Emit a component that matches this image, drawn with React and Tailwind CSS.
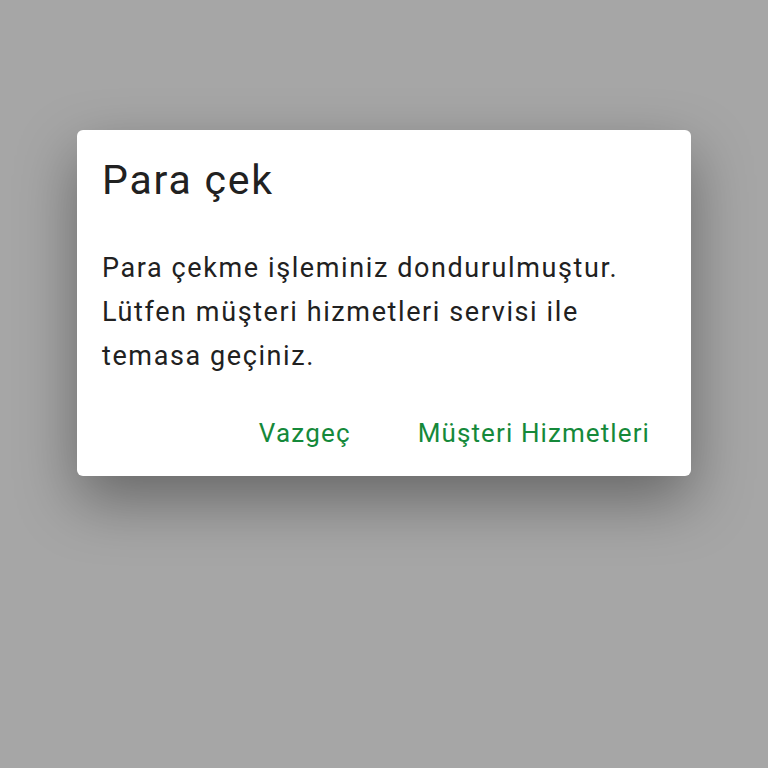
export default function App() {
    return (
        <div
            className="w-full h-screen bg-[#a6a6a6] pt-[130px] pl-[77px]"
            style={{ fontFamily: "Roboto, 'Noto Sans', sans-serif" }}
        >
            {/* Dialog */}
            <div className="w-[614px] bg-white rounded-[6px] shadow-[0_24px_60px_rgba(0,0,0,0.38)] pt-[26px] pb-[27px]">
                <h2 className="pl-[25px] text-[41px] leading-[48px] tracking-[1.8px] text-[#212121] font-normal">
                    Para çek
                </h2>

                <p className="mt-[42px] pl-[25px] pr-[10px] text-[27px] leading-[44px] tracking-[1.6px] text-[#212121] whitespace-nowrap">
                    Para çekme işleminiz dondurulmuştur.
                    <br />
                    Lütfen müşteri hizmetleri servisi ile
                    <br />
                    temasa geçiniz.
                </p>

                {/* Actions */}
                <div className="mt-[39px] flex justify-end items-center gap-[67px] pr-[41px]">
                    <button className="text-[26px] leading-[32px] tracking-[1.2px] text-[#15893a]">Vazgeç</button>
                    <button className="text-[26px] leading-[32px] tracking-[1.1px] text-[#15893a]">Müşteri Hizmetleri</button>
                </div>
            </div>
        </div>
    );
}
